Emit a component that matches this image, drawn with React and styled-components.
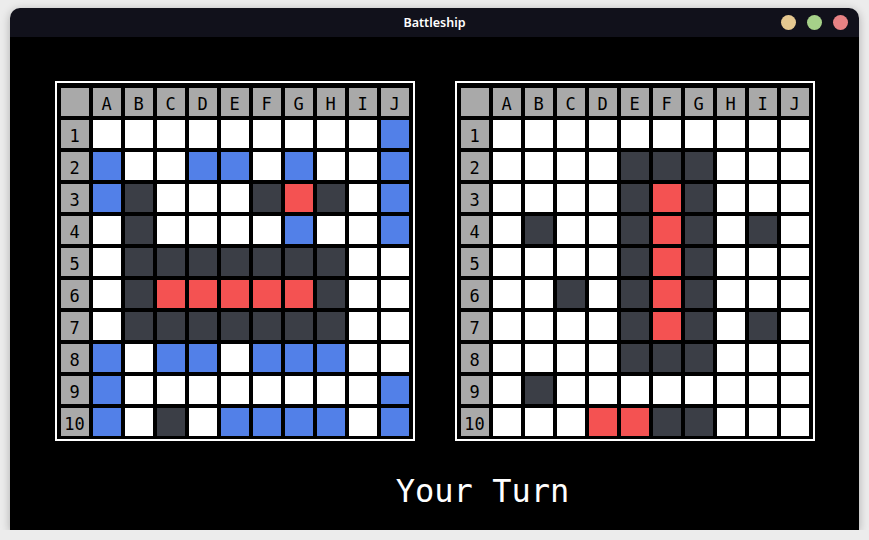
import React from "react";
import styled, { createGlobalStyle } from "styled-components";

const GlobalStyle = createGlobalStyle`
  html, body {
    margin: 0;
    padding: 0;
    background: #ececec;
  }
  body {
    padding: 8px 10px 0 10px;
    font-family: "DejaVu Sans Mono", monospace;
  }
`;

const COLORS = {
  ".": "#ffffff",
  b: "#5280e8",
  x: "#3b3e46",
  r: "#f45252",
};

const COLS = ["A", "B", "C", "D", "E", "F", "G", "H", "I", "J"];

const myFleet = [
  ".........b",
  "b..bb.b..b",
  "bx...xrx.b",
  ".x....b..b",
  ".xxxxxxx..",
  ".xrrrrrx..",
  ".xxxxxxx..",
  "b.bb.bbb..",
  "b........b",
  "b.x.bbbb.b",
];

const enemyWaters = [
  "..........",
  "....xxx...",
  "....xrx...",
  ".x..xrx.x.",
  "....xrx...",
  "..x.xrx...",
  "....xrx.x.",
  "....xxx...",
  ".x........",
  "...rrxx...",
];

const Window = styled.div`
  width: 849px;
  height: 522px;
  display: flex;
  flex-direction: column;
  border-radius: 10px 10px 0 0;
  overflow: hidden;
  box-shadow: 0 2px 10px rgba(0, 0, 0, 0.28);
`;

const TitleBar = styled.div`
  height: 29px;
  flex-shrink: 0;
  background: #11111b;
  display: flex;
  align-items: center;
  justify-content: center;
  position: relative;
`;

const Title = styled.span`
  color: #ffffff;
  font-family: "Noto Sans", sans-serif;
  font-weight: 600;
  font-size: 12.5px;
`;

const Controls = styled.div`
  position: absolute;
  right: 11px;
  top: 7px;
  display: flex;
  gap: 11px;
`;

const Dot = styled.span`
  width: 15px;
  height: 15px;
  border-radius: 50%;
  background: ${(p) => p.$color};
`;

const Content = styled.div`
  flex: 1;
  background: #000000;
  display: flex;
  flex-direction: column;
  align-items: center;
  padding-top: 44px;
`;

const Boards = styled.div`
  display: flex;
  gap: 40px;
`;

const Board = styled.div`
  border: 2px solid #ffffff;
  padding: 5px 4px 3px 4px;
  display: grid;
  grid-template-columns: repeat(11, 28px);
  grid-auto-rows: 28px;
  gap: 4px;
`;

const Label = styled.div`
  background: #a9a9a9;
  color: #000000;
  font-family: "DejaVu Sans Mono", monospace;
  font-size: 17px;
  display: flex;
  align-items: center;
  justify-content: center;
  padding-top: 3px;
  box-sizing: border-box;
`;

const Cell = styled.div`
  background: ${(p) => COLORS[p.$state]};
`;

const Status = styled.div`
  color: #ffffff;
  font-family: "DejaVu Sans Mono", monospace;
  font-size: 32px;
  line-height: 38px;
  margin-top: 31px;
  padding-left: 96px;
`;

function Grid({ rows }) {
  return (
    <Board>
      <Label />
      {COLS.map((c) => (
        <Label key={c}>{c}</Label>
      ))}
      {rows.map((row, i) => (
        <React.Fragment key={i}>
          <Label>{i + 1}</Label>
          {row.split("").map((s, j) => (
            <Cell key={j} $state={s} />
          ))}
        </React.Fragment>
      ))}
    </Board>
  );
}

export default function App() {
  return (
    <>
      <GlobalStyle />
      <Window>
        <TitleBar>
          <Title>Battleship</Title>
          <Controls>
            <Dot $color="#e5c890" />
            <Dot $color="#a6d189" />
            <Dot $color="#e78284" />
          </Controls>
        </TitleBar>
        <Content>
          <Boards>
            <Grid rows={myFleet} />
            <Grid rows={enemyWaters} />
          </Boards>
          <Status>Your Turn</Status>
        </Content>
      </Window>
    </>
  );
}
